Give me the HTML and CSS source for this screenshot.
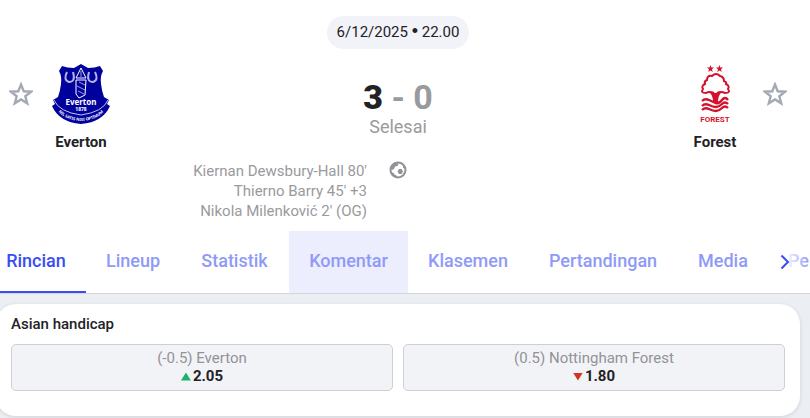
FILE: index.html
```html
<!DOCTYPE html>
<html lang="id">
<head>
<meta charset="utf-8">
<meta name="viewport" content="width=device-width, initial-scale=1">
<title>Everton - Forest</title>
<link rel="stylesheet" href="styles.css">
</head>
<body>
<header class="match">
  <p class="kickoff"><time datetime="2025-12-06T22:00">6/12/2025 <span class="dot">•</span> 22.00</time></p>
  <div class="teams">
    <button class="star" type="button" aria-label="Favorit Everton">
      <svg viewBox="0 0 24 24" width="24" height="24"><path d="M12 2.500 14.700 9.300 22 9.700 16.300 14.300 18.200 21.300 12 17.400 5.800 21.300 7.700 14.300 2 9.700 9.300 9.300Z"/></svg>
    </button>
    <a class="team" href="#everton">
      <svg class="crest" viewBox="0 0 62 64" width="62" height="64" aria-hidden="true">
        <path class="blue" d="M31 2 38 6Q45 6 50 4L53 9Q50 14 51 22 52 30 54 35L59 38 57 42 60 44Q53 60 31 62 9 60 2 44L5 42 3 38 8 35Q10 30 11 22 12 14 9 9L12 4Q17 6 24 6Z"/>
        <path class="line" d="M4 38Q9 50 31 53 53 50 58 38"/>
        <path class="shoe" d="M17 10Q13 18 19 20 26 20 23 10M39 10Q36 20 43 20 49 18 45 10"/>
        <path class="tower" d="M31 6 36 16H26ZM26 18H36L35 33 29 36 26 32Z"/>
        <path class="brick" d="M31 9V15M29 20 35 23M27 24 35 28M28 29 34 32"/>
        <text class="crest-name" x="31" y="43">Everton</text>
        <text class="crest-year" x="31" y="49">1878</text>
        <path id="ribbon" fill="none" d="M4 43Q11 58 31 59 51 58 58 43"/>
        <text class="motto"><textPath href="#ribbon" startOffset="50%">NIL SATIS NISI OPTIMUM</textPath></text>
      </svg>
      <span>Everton</span>
    </a>
    <div class="result">
      <p class="score"><strong>3</strong> - 0</p>
      <p class="status">Selesai</p>
    </div>
    <a class="team" href="#forest">
      <svg class="crest" viewBox="0 0 62 64" width="62" height="64" aria-hidden="true">
        <g class="red">
          <path d="M26.500 3 27.400 5.500 30 5.600 28 7.200 28.700 9.900 26.500 8.400 24.300 9.900 25 7.200 23 5.600 25.600 5.500ZM35.500 3 36.400 5.500 39 5.600 37 7.200 37.700 9.900 35.500 8.400 33.300 9.900 34 7.200 32 5.600 34.600 5.500Z"/>
          <path d="M25 30Q31 32 38 30 34 33 34 40H29Q29 33 25 30Z"/>
        </g>
        <path class="tree" d="M30 31Q25 29 22 31 16 31 19 27 17 24 21 22 20 19 23 18 23 13 28 14 32 10 36 14 40 15 40 19 43 20 42 22 46 24 44 27 47 31 41 31 37 29 33 31"/>
        <path class="water" d="M18 39Q21 36 25 38T32 41 38 38 44 38M18 44Q21 41 25 43T32 45 38 42 44 42M18 48Q21 45 25 47T32 49 38 46 44 46"/>
        <text class="forest-name" x="31" y="60">FOREST</text>
      </svg>
      <span>Forest</span>
    </a>
    <button class="star" type="button" aria-label="Favorit Forest">
      <svg viewBox="0 0 24 24" width="24" height="24"><path d="M12 2.500 14.700 9.300 22 9.700 16.300 14.300 18.200 21.300 12 17.400 5.800 21.300 7.700 14.300 2 9.700 9.300 9.300Z"/></svg>
    </button>
  </div>
  <div class="goals">
    <ul>
      <li>Kiernan Dewsbury-Hall 80'</li>
      <li>Thierno Barry 45' +3</li>
      <li>Nikola Milenković 2' (OG)</li>
    </ul>
    <svg class="ball" viewBox="0 0 18 18" width="18" height="18" aria-hidden="true">
      <circle cx="9" cy="9" r="7.500"/>
      <path d="M10 8 12.500 8 14 10.500 12.500 13 10 13 8.500 10.500ZM5 2 8 1.500 9.500 3 8.500 5 6 5.500 5 8 3 9 1 8 2 5ZM12 2 16 5 16 8 14 6.500 14 4ZM2 11 4.500 12 6 14 8.500 15 8 17 4 15Z"/>
    </svg>
  </div>
</header>
<nav class="tabs">
  <div class="tab-list">
    <a class="active" href="#rincian">Rincian</a>
    <a href="#lineup">Lineup</a>
    <a href="#statistik">Statistik</a>
    <a class="hovered" href="#komentar">Komentar</a>
    <a href="#klasemen">Klasemen</a>
    <a href="#pertandingan">Pertandingan</a>
    <a href="#media">Media</a>
    <a class="last" href="#pel">Pel</a>
  </div>
  <button class="next" type="button" aria-label="Berikutnya">
    <svg viewBox="0 0 10 16" width="10" height="16"><path d="M1.500 1.500 8 8 1.500 14.500"/></svg>
  </button>
</nav>
<main>
  <section class="card">
    <h2>Asian handicap</h2>
    <div class="odds">
      <button type="button"><span>(-0.5) Everton</span><b><i class="up"></i>2.05</b></button>
      <button type="button"><span>(0.5) Nottingham Forest</span><b><i class="down"></i>1.80</b></button>
    </div>
  </section>
</main>
</body>
</html>
```
FILE: styles.css
```css
* { box-sizing: border-box; }
body {
  margin: 0;
  min-height: 100vh;
  overflow-x: hidden;
  background: #ebeef3;
  color: #222226;
  font-family: Roboto, "Liberation Sans", sans-serif;
  font-size: 15px;
}
p, ul, h2 { margin: 0; padding: 0; }
ul { list-style: none; }
a { color: inherit; text-decoration: none; }
button { font: inherit; cursor: pointer; }

.match {
  display: flex;
  flex-direction: column;
  padding: 16px 23px 10px 9px;
  background: #fff;
}
.kickoff {
  align-self: center;
  padding: 0 10px;
  border-radius: 17px;
  background: #f2f3f8;
  font-size: 15px;
  line-height: 33px;
}
.dot { font-family: "Liberation Sans", sans-serif; font-size: 18px; line-height: 1; }
.teams {
  display: grid;
  grid-template-columns: 24px 80px 1fr 80px 24px;
  column-gap: 8px;
  margin-top: 13px;
}
.star {
  align-self: start;
  height: 24px;
  margin-top: 20px;
  padding: 0;
  border: 0;
  background: none;
}
.star svg { display: block; fill: none; stroke: #a4a9b5; stroke-width: 2.4; }
.team {
  display: flex;
  flex-direction: column;
  align-items: center;
  gap: 6px;
  font-weight: 700;
  line-height: 20px;
}
.result { padding-top: 15px; text-align: center; color: #9a9a9e; }
.score { font-size: 34px; font-weight: 700; line-height: 40px; }
.score strong { color: #222226; }
.status { font-size: 18px; line-height: 20px; }
.goals {
  display: grid;
  grid-template-columns: 1fr 62px 1fr;
  justify-items: center;
  margin-top: 9px;
  color: #9a9a9e;
  line-height: 20px;
}
.goals ul { justify-self: end; text-align: right; }
.ball circle { fill: none; stroke: #929296; stroke-width: 2; }
.ball path { fill: #929296; }

.blue { fill: #00009c; }
.line { fill: none; stroke: #c4c4ea; stroke-width: 1; }
.shoe { fill: none; stroke: #b4b4e4; stroke-width: 2; }
.tower { fill: #00009c; stroke: #fff; stroke-width: 1; }
.brick { fill: none; stroke: #9c9cdc; stroke-width: 1; }
.crest text { font-family: "Noto Sans", sans-serif; font-weight: 700; text-anchor: middle; fill: #fff; }
.crest .crest-name { font-size: 8px; }
.crest .crest-year { font-size: 5px; }
.crest .motto { font-size: 4px; }
.red { fill: #d4112d; }
.tree { fill: none; stroke: #d4112d; stroke-width: 2; }
.water { fill: none; stroke: #d4112d; stroke-width: 2.4; }
.crest .forest-name { font-family: Roboto, sans-serif; font-size: 8px; fill: #d4112d; }

.tabs {
  position: relative;
  overflow: hidden;
  border-bottom: 1px solid #d5d6da;
  background: #fff;
  color: #8f9af8;
  font-size: 18px;
  font-weight: 500;
}
.tab-list {
  display: grid;
  grid-template-columns: 100px 94px 109px 119px 120px 150px 90px 1fr;
  margin-left: -14px;
}
.tab-list a { height: 62px; line-height: 60px; text-align: center; }
.tab-list .active { border-bottom: 2px solid #374df5; color: #374df5; }
.tab-list .hovered { background: #eceefe; }
.tab-list .last { padding-left: 20px; text-align: left; }
.next {
  position: absolute;
  top: 0;
  right: 0;
  display: flex;
  align-items: center;
  width: 42px;
  height: 62px;
  padding: 0 0 0 12px;
  border: 0;
  background: linear-gradient(to right, #fff 40%, #fff0);
}
.next path { fill: none; stroke: #374df5; stroke-width: 2; }

main { padding: 10px 10px 2px 0; }
.card {
  margin-left: -4px;
  padding: 10px 15px 25px;
  border-radius: 20px;
  background: #fff;
  box-shadow: 0 1px 4px #0000001f;
}
.card h2 { font-size: 15px; font-weight: 500; line-height: 20px; }
.odds { display: grid; grid-template-columns: 1fr 1fr; gap: 10px; margin-top: 10px; }
.odds button {
  display: flex;
  flex-direction: column;
  align-items: center;
  padding: 4px;
  border: 1px solid #cfcfd6;
  border-radius: 5px;
  background: #f2f3f7;
  color: #222226;
  line-height: 18px;
}
.odds span { color: #929297; }
.odds b { display: flex; align-items: center; gap: 2px; line-height: 19px; }
.up, .down { width: 10px; height: 8px; background: #1db36b; clip-path: polygon(50% 0, 100% 100%, 0 100%); }
.down { background: #cf3522; clip-path: polygon(0 0, 100% 0, 50% 100%); }
```
